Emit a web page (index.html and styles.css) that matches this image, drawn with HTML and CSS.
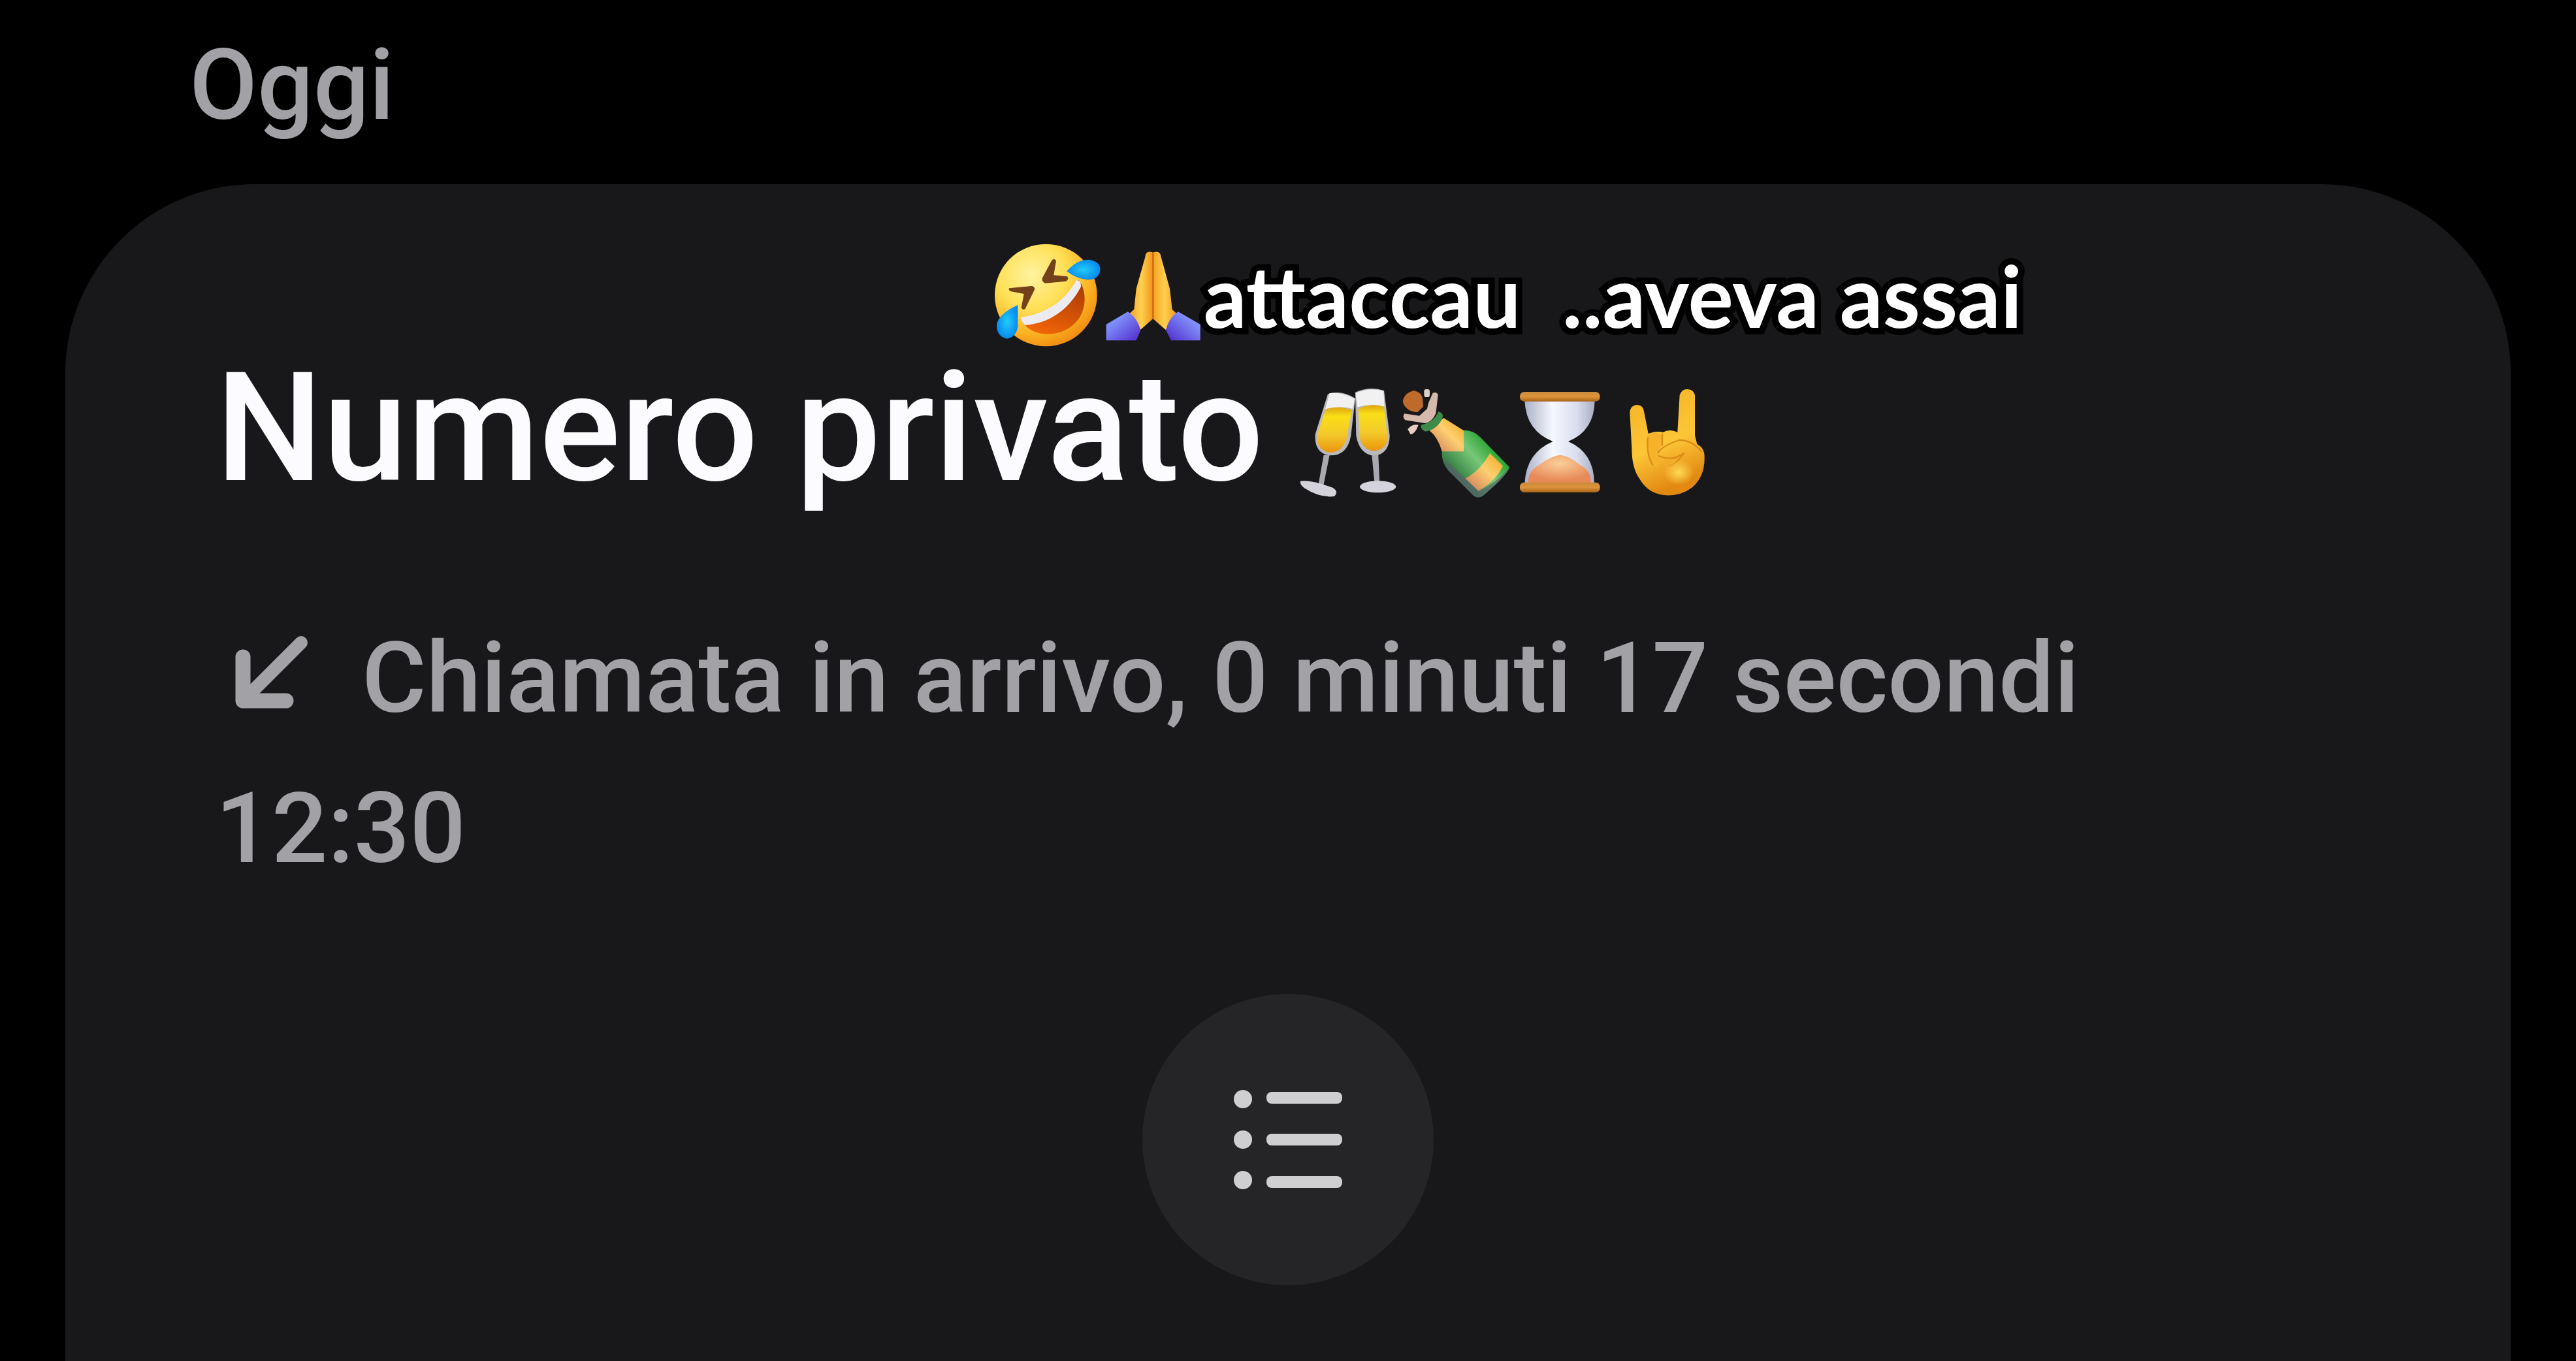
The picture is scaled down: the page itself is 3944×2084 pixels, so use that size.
FILE: index.html
```
<!DOCTYPE html>
<html lang="it">
<head>
    <meta charset="UTF-8">
    <meta name="viewport" content="width=device-width, initial-scale=1.0">
    <title>Registro chiamate</title>
    <link rel="stylesheet" href="styles.css">
</head>
<body>

    <h2 class="day">Oggi</h2>

    <main class="card">
        <!-- Nota scritta sopra la chiamata -->
        <div class="note">
            <svg class="note-emoji" viewBox="72 60 480 480" role="img" aria-label="Risata">
                <defs>
                    <radialGradient id="face" cx="0.36" cy="0.3" r="0.75">
                        <stop offset="0" stop-color="#fff3a0"/>
                        <stop offset="0.45" stop-color="#ffdf55"/>
                        <stop offset="0.75" stop-color="#fbb524"/>
                        <stop offset="1" stop-color="#ef8a10"/>
                    </radialGradient>
                    <linearGradient id="mouth" x1="0.8" y1="0" x2="0.4" y2="1">
                        <stop offset="0" stop-color="#a83a04"/>
                        <stop offset="1" stop-color="#f06408"/>
                    </linearGradient>
                    <radialGradient id="tear">
                        <stop offset="0" stop-color="#22ccf8"/>
                        <stop offset="1" stop-color="#068bf0"/>
                    </radialGradient>
                </defs>
                <circle cx="307" cy="300" r="235" fill="url(#face)"/>
                <path d="M190 408C310 395 400 330 456 230C492 268 496 350 460 405C415 470 340 488 275 474C235 464 205 440 190 408Z" fill="url(#mouth)"/>
                <path d="M190 402C310 385 395 325 448 230Q470 232 468 262C410 370 320 430 212 438Q196 425 190 402Z" fill="#ececf0"/>
                <path d="M334 140Q345 128 354 142L343 208L405 214Q415 226 400 236L304 245Q288 240 290 222Z" fill="#74411a"/>
                <path d="M138 268Q134 276 144 282L206 294L194 358Q202 372 212 362L256 272Q254 258 240 258Z" fill="#74411a"/>
                <path d="M403 190Q450 135 505 137Q558 145 556 185Q550 228 500 229Q445 225 403 190Z" fill="url(#tear)"/>
                <path d="M178 345Q90 385 81 435Q80 490 128 500Q170 494 178 445Z" fill="url(#tear)"/>
            </svg>
            <svg class="note-emoji" viewBox="552 60 480 480" role="img" aria-label="Mani giunte">
                <defs>
                    <linearGradient id="hand" x1="0" x2="1">
                        <stop offset="0" stop-color="#f6a021"/>
                        <stop offset="0.5" stop-color="#ffd04e"/>
                        <stop offset="1" stop-color="#f3951c"/>
                    </linearGradient>
                    <linearGradient id="sleeve" x1="0" y1="0" x2="1" y2="1">
                        <stop offset="0.3" stop-color="#7f8dfb"/>
                        <stop offset="1" stop-color="#5028c8"/>
                    </linearGradient>
                    <linearGradient id="sleeve2" x1="1" y1="0" x2="0" y2="1">
                        <stop offset="0.3" stop-color="#7f8dfb"/>
                        <stop offset="1" stop-color="#5028c8"/>
                    </linearGradient>
                </defs>
                <path d="M799 104Q765 92 763 125L722 270L712 365L690 385L740 460L799 408Z" fill="url(#hand)"/>
                <path d="M799 104Q832 92 836 125L876 270L887 365L908 385L858 460L799 408Z" fill="url(#hand)"/>
                <path d="M799 104V408" stroke="#cf7012" stroke-width="8"/>
                <path d="M683 376Q724 400 742 460L722 508H584V434Z" fill="url(#sleeve)"/>
                <path d="M915 376Q874 400 858 460L882 508H1016V434Z" fill="url(#sleeve2)"/>
            </svg>
            <span class="note-text">attaccau&nbsp; ..aveva assai</span>
        </div>

        <!-- Dettagli della chiamata -->
        <section class="call">
            <h1 class="caller">
                <span>Numero privato</span>
                <span class="caller-emoji">
                    <svg viewBox="78 72 492 504" role="img" aria-label="Brindisi">
                        <defs>
                            <linearGradient id="wine" x1="0" y1="0" x2="0" y2="1">
                                <stop offset="0" stop-color="#dfa511"/>
                                <stop offset="0.2" stop-color="#f9df16"/>
                                <stop offset="0.6" stop-color="#f3c92b"/>
                                <stop offset="1" stop-color="#eb940c"/>
                            </linearGradient>
                        </defs>
                        <path d="M228 100Q290 80 354 120L334 290Q318 385 236 382Q165 372 170 285Z" fill="#b9b9bc"/>
                        <path d="M236 96Q295 90 352 122L343 168Q285 150 216 170Z" fill="#f1f1f2"/>
                        <path d="M218 170Q280 150 338 174L316 300Q296 372 230 368Q172 352 180 285Z" fill="url(#wine)"/>
                        <path d="M209 380H236L208 520H184Z" fill="#aaa9b2"/>
                        <path d="M102 500Q145 492 250 530Q280 548 258 570Q190 578 120 532Q98 514 102 500Z" fill="#d4d3dc"/>
                        <path d="M354 92Q420 62 486 84L512 290Q512 375 440 384Q372 376 358 290Z" fill="#b9b9bc"/>
                        <path d="M356 96Q420 68 484 86L488 158Q425 142 364 160Z" fill="#f1f1f2"/>
                        <path d="M368 168Q425 138 486 158L502 300Q500 356 438 362Q388 354 374 300Z" fill="url(#wine)"/>
                        <path d="M430 380H460L466 515H443Z" fill="#aaa9b2"/>
                        <ellipse cx="458" cy="526" rx="83" ry="27" fill="#d4d3dc"/>
                    </svg>
                    <svg viewBox="90 72 492 504" role="img" aria-label="Spumante">
                        <defs>
                            <linearGradient id="bottle" x1="0.1" y1="0.8" x2="0.8" y2="0.2">
                                <stop offset="0" stop-color="#36404a"/>
                                <stop offset="0.25" stop-color="#3d8a49"/>
                                <stop offset="0.6" stop-color="#78c878"/>
                                <stop offset="1" stop-color="#189a22"/>
                            </linearGradient>
                            <linearGradient id="foil" x1="0" y1="1" x2="1" y2="0">
                                <stop offset="0" stop-color="#c97458"/>
                                <stop offset="0.55" stop-color="#ffcf70"/>
                                <stop offset="1" stop-color="#eda51c"/>
                            </linearGradient>
                        </defs>
                        <path d="M370 268Q410 262 450 300L582 436Q575 470 462 566Q440 582 418 568L300 450Q268 410 272 362Z" fill="url(#bottle)"/>
                        <path d="M300 450L418 568Q440 582 462 566Q560 485 580 440Q510 520 440 545L380 488Q325 440 290 400Z" fill="#59606c" opacity="0.7"/>
                        <path d="M492 372L552 430Q520 500 440 545L380 488Q450 450 492 372Z" fill="url(#foil)"/>
                        <path d="M280 210L372 268V364H272Q255 300 212 265Z" fill="url(#foil)"/>
                        <path d="M256 180Q285 190 272 215Q250 262 196 272Q172 262 176 242Q236 230 256 180Z" fill="#3c8b48"/>
                        <path d="M100 190L168 200L204 168L210 142L230 95Q250 88 254 105L244 190Q226 230 194 234L104 220Q88 208 100 190Z" fill="#d6b8ac"/>
                        <path d="M115 262Q135 235 164 242Q150 282 128 286Z" fill="#e6cec2"/>
                        <rect x="190" y="78" width="26" height="36" rx="10" fill="#decfc9"/>
                        <path d="M92 135Q100 92 145 85Q180 92 184 125L186 158L160 184Q105 180 92 135Z" fill="#bd6a2a"/>
                    </svg>
                    <svg viewBox="102 72 492 504" role="img" aria-label="Clessidra">
                        <defs>
                            <linearGradient id="glass" x1="0" x2="1">
                                <stop offset="0" stop-color="#aab0c6"/>
                                <stop offset="0.4" stop-color="#f6f8ff"/>
                                <stop offset="0.75" stop-color="#d8dcec"/>
                                <stop offset="1" stop-color="#a8adc2"/>
                            </linearGradient>
                            <linearGradient id="wood" x1="0" y1="0" x2="0" y2="1">
                                <stop offset="0" stop-color="#c98b3c"/>
                                <stop offset="0.5" stop-color="#de933a"/>
                                <stop offset="1" stop-color="#a86417"/>
                            </linearGradient>
                            <radialGradient id="sand" cx="0.5" cy="0.3" r="0.6">
                                <stop offset="0" stop-color="#fbcf98"/>
                                <stop offset="1" stop-color="#e8895a"/>
                            </radialGradient>
                        </defs>
                        <path d="M172 130H494Q492 270 372 318Q492 370 492 512H172Q178 370 302 318Q178 270 172 130Z" fill="url(#glass)"/>
                        <path d="M188 510Q186 450 240 425Q290 385 335 380Q380 385 425 425Q480 450 476 510Z" fill="url(#sand)"/>
                        <rect x="150" y="90" width="368" height="44" rx="20" fill="url(#wood)"/>
                        <rect x="150" y="506" width="368" height="46" rx="20" fill="url(#wood)"/>
                    </svg>
                    <svg viewBox="594 72 492 504" role="img" aria-label="Corna">
                        <defs>
                            <linearGradient id="horns" x1="0" y1="0" x2="0.3" y2="1">
                                <stop offset="0" stop-color="#f4b125"/>
                                <stop offset="0.6" stop-color="#fdc637"/>
                                <stop offset="1" stop-color="#e28912"/>
                            </linearGradient>
                            <radialGradient id="palm">
                                <stop offset="0" stop-color="#ffd955"/>
                                <stop offset="1" stop-color="#ffd955" stop-opacity="0"/>
                            </radialGradient>
                        </defs>
                        <path d="M655 185Q658 150 690 150Q716 152 720 180L740 282Q780 268 806 276Q840 258 874 276L884 105Q894 76 920 78Q948 80 954 105V290L964 330Q1000 350 998 390Q1000 480 940 530Q890 568 820 565Q740 560 700 490Q664 440 664 350Z" fill="url(#horns)"/>
                        <path d="M737 290Q736 360 745 400Q760 435 785 434Q798 410 786 372Q784 350 802 340V290Q772 268 737 290Z" fill="#f6b32a"/>
                        <path d="M785 370Q800 340 880 312Q940 310 985 365M790 385Q850 412 905 370Q870 420 836 430M804 285V335M738 300Q730 380 760 425" fill="none" stroke="#d98d1a" stroke-width="7" stroke-linecap="round"/>
                        <ellipse cx="880" cy="460" rx="70" ry="60" fill="url(#palm)"/>
                    </svg>
                </span>
            </h1>

            <p class="info">
                <svg class="arrow" viewBox="328 972 144 132" aria-hidden="true">
                    <path d="M370 1005V1072H436" fill="none" stroke="#a2a1a6" stroke-width="23" stroke-linecap="round" stroke-linejoin="round"/>
                    <path d="M374 1068L459 983" stroke="#a2a1a6" stroke-width="20" stroke-linecap="round"/>
                </svg>
                <span>Chiamata in arrivo, 0 minuti 17 secondi</span>
            </p>
            <p class="info"><time datetime="12:30">12:30</time></p>
        </section>

        <button class="list-button" type="button" aria-label="Mostra elenco">
            <svg class="list-icon" viewBox="0 0 168 168">
                <circle cx="15" cy="22" r="14"/>
                <circle cx="15" cy="84" r="14"/>
                <circle cx="15" cy="146" r="14"/>
                <rect x="51" y="11" width="116" height="18" rx="8"/>
                <rect x="51" y="75" width="116" height="18" rx="8"/>
                <rect x="51" y="140" width="116" height="18" rx="8"/>
            </svg>
        </button>
    </main>

</body>
</html>
```
FILE: styles.css
```
/* Stili generali */
* {
    box-sizing: border-box;
}

body {
    margin: 0;
    min-height: 100vh;
    display: flex;
    flex-direction: column;
    background-color: #000;
    color: #a2a1a6;
    font-family: Roboto, "Noto Sans", sans-serif;
    font-size: 151px;
    font-weight: 500;
}

h1,
h2,
p {
    margin: 0;
    font-size: inherit;
    font-weight: 500;
}

.day {
    padding: 16px 290px 36px;
    line-height: 230px;
}

/* Scheda della chiamata */
.card {
    flex: 1;
    display: flex;
    flex-direction: column;
    margin: 0 100px;
    padding-top: 90px;
    background-color: #18181a;
    border-radius: 290px 290px 0 0;
}

/* Nota con contorno nero */
.note {
    display: flex;
    align-items: center;
    margin-left: 38%;
    height: 160px;
}

.note-emoji {
    flex: none;
    width: 160px;
    height: 160px;
    overflow: visible;
}

.note-text {
    color: #fff;
    font-family: Lato, sans-serif;
    font-size: 130px;
    font-weight: 700;
    line-height: 160px;
    white-space: nowrap;
    -webkit-text-stroke: 20px #000;
    paint-order: stroke fill;
}

.call {
    padding: 4px 230px 0;
}

.caller {
    display: flex;
    gap: 48px;
    margin-bottom: 148px;
    color: #fcfbff;
    font-size: 232px;
    line-height: 240px;
    white-space: nowrap;
}

.caller-emoji {
    display: flex;
    align-items: flex-end;
    padding-bottom: 14px;
}

.caller-emoji svg {
    width: 164px;
    height: 168px;
}

.info {
    display: flex;
    align-items: center;
    gap: 80px;
    line-height: 230px;
    white-space: nowrap;
}

.arrow {
    width: 144px;
    height: 132px;
}

/* Pulsante elenco */
.list-button {
    display: flex;
    align-items: center;
    justify-content: center;
    align-self: center;
    width: 446px;
    height: 446px;
    margin-top: 138px;
    padding: 0;
    border: none;
    border-radius: 50%;
    background-color: #252527;
    cursor: pointer;
}

.list-icon {
    width: 168px;
    height: 168px;
    fill: #cfced0;
}
```
